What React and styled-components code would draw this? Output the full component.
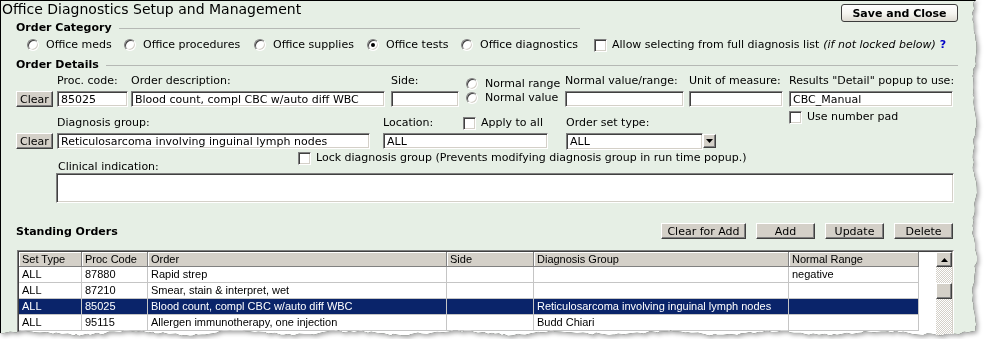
import React from 'react';
import styled, { createGlobalStyle, css } from 'styled-components';

const UI = '"DejaVu Sans", Verdana, sans-serif';
const GRID_FONT = '"Liberation Sans", Arial, sans-serif';

// the screenshot is cut out of a bigger window: ragged right and bottom edge
const PAPER_W = 979;
const PAPER_H = 339;
let seed = 17;
const rnd = () => {
  seed = (seed * 9301 + 49297) % 233280;
  return seed / 233280;
};
const tornEdge = (() => {
  const pts = ['0px 0px', `${PAPER_W - 3}px 0px`];
  for (let y = 3; y < PAPER_H - 5; y += 2 + Math.round(rnd() * 4)) {
    const x = PAPER_W - 3.5 - 1.6 * Math.sin(y / 11) - rnd() * 2.2;
    pts.push(`${x.toFixed(1)}px ${y}px`);
  }
  for (let x = PAPER_W - 5; x > 0; x -= 2 + Math.round(rnd() * 5)) {
    const y = PAPER_H - 5 - 1.8 * Math.sin(x / 17) - rnd() * 2.4;
    pts.push(`${x}px ${y.toFixed(1)}px`);
  }
  pts.push(`0px ${PAPER_H - 6}px`);
  return `polygon(${pts.join(', ')})`;
})();

const GlobalStyle = createGlobalStyle`
  html, body { margin: 0; padding: 0; background: #fff; }
`;

const raised = css`
  box-sizing: border-box;
  background: #d4d0c8;
  border: 1px solid;
  border-color: #fff #404040 #404040 #fff;
  box-shadow: inset -1px -1px #808080;
`;

const sunken = css`
  box-sizing: border-box;
  background: #fff;
  border: 1px solid;
  border-color: #808080 #fff #fff #808080;
  box-shadow: inset 1px 1px #404040, inset -1px -1px #d4d0c8;
`;

const Sheet = styled.div`
  width: ${PAPER_W}px;
  height: ${PAPER_H}px;
  filter: drop-shadow(0 0 0.6px rgba(0, 0, 0, 0.9)) drop-shadow(2px 2px 2px rgba(0, 0, 0, 0.35));
`;

const Paper = styled.div`
  box-sizing: border-box;
  width: 100%;
  height: 100%;
  overflow: hidden;
  background: #e6efe5;
  border-left: 1px solid #000;
  border-top: 1px solid #000;
  clip-path: ${tornEdge};
  font: 11px/14px ${UI};
  color: #000;
`;

const TitleBar = styled.div`
  display: flex;
  justify-content: space-between;
  align-items: flex-start;
  width: 957px;
  height: 20px;
`;

const Title = styled.div`
  margin: 0 0 0 1px;
  font-size: 14px;
  line-height: 17px;
`;

const SaveButton = styled.button`
  width: 117px;
  height: 18px;
  margin-top: 3px;
  padding: 0;
  border: 1px solid #3c3c3c;
  border-radius: 3px;
  background: linear-gradient(#ffffff, #f4f4ef 55%, #dedcd3);
  font: bold 11px ${UI};
  color: #000;
`;

const SectionHead = styled.div`
  box-sizing: border-box;
  display: flex;
  align-items: center;
  width: ${(p) => p.$w}px;
  height: 14px;
  margin-top: ${(p) => p.$top}px;
  padding-left: 15px;
`;

const HeadText = styled.span`
  font-weight: bold;
  white-space: nowrap;
`;

const Rule = styled.span`
  flex: 1;
  height: 1px;
  margin-left: 7px;
  background: #b5b8b4;
`;

const CategoryRow = styled.div`
  display: flex;
  align-items: center;
  height: 14px;
  margin-top: 3px;
  padding-left: 26px;
`;

const Choice = styled.label`
  display: flex;
  align-items: center;
  flex: none;
  width: ${(p) => (p.$w ? `${p.$w}px` : 'auto')};
  white-space: nowrap;
`;

const Radio = styled.span`
  position: relative;
  flex: none;
  width: 12px;
  height: 12px;
  margin-right: 7px;
  border-radius: 50%;
  ${sunken};

  &::after {
    content: '';
    display: ${(p) => (p.$on ? 'block' : 'none')};
    position: absolute;
    left: 3px;
    top: 3px;
    width: 4px;
    height: 4px;
    border-radius: 50%;
    background: #000;
  }
`;

const Check = styled.span`
  flex: none;
  width: 13px;
  height: 13px;
  margin-right: 5px;
  ${sunken};
`;

const Hint = styled.i`
  margin-left: 4px;
`;

const Help = styled.b`
  margin-left: 4px;
  color: #0000c8;
`;

const FieldRow = styled.div`
  display: flex;
  align-items: flex-start;
  height: ${(p) => p.$h}px;
  margin-top: ${(p) => p.$top}px;
  padding-left: 15px;
`;

const Col = styled.div`
  display: flex;
  flex-direction: column;
  flex: none;
  width: ${(p) => p.$w}px;
  margin-left: ${(p) => p.$gap || 0}px;
  padding-top: ${(p) => p.$pad || 0}px;
`;

const Label = styled.div`
  display: flex;
  align-items: center;
  height: 14px;
  margin-bottom: 3px;
  white-space: nowrap;
`;

const LabelPart = styled.span`
  flex: none;
  width: ${(p) => p.$w}px;
`;

const Line = styled.div`
  display: flex;
  align-items: center;
  height: 14px;
  white-space: nowrap;
`;

const TextBox = styled.input`
  ${sunken};
  width: 100%;
  height: 16px;
  padding: 0 3px;
  font: 11px ${UI};
  color: #000;
  outline: none;
`;

const SubCheck = styled(Choice)`
  margin-top: 3px;
`;

const ClearButton = styled.button`
  ${raised};
  width: 37px;
  height: 16px;
  padding: 0;
  font: 11px ${UI};
  color: #000;
`;

const SelectBox = styled.div`
  display: flex;
  align-items: flex-start;
`;

const SelectValue = styled.div`
  ${sunken};
  width: 137px;
  height: 17px;
  padding: 0 3px;
  line-height: 15px;
`;

const ArrowButton = styled.span`
  ${raised};
  display: flex;
  align-items: center;
  justify-content: center;
  flex: none;
  width: ${(p) => p.$w}px;
  height: ${(p) => p.$h}px;
  margin-top: ${(p) => p.$top || 0}px;
`;

const LockRow = styled.div`
  display: flex;
  height: 22px;
  margin-top: 4px;
  padding-left: 57px;
`;

const ClinicalLabel = styled.div`
  flex: none;
  align-self: flex-end;
  width: 240px;
  line-height: 13px;
`;

const LockChoice = styled(Choice)`
  align-self: flex-start;
`;

const Memo = styled.textarea`
  ${sunken};
  display: block;
  width: 898px;
  height: 30px;
  margin: 0 0 0 55px;
  padding: 2px 3px;
  resize: none;
  font: 11px ${UI};
  outline: none;
`;

const OrdersBar = styled.div`
  box-sizing: border-box;
  display: flex;
  align-items: flex-start;
  gap: 10px;
  width: 952px;
  height: 16px;
  margin-top: 20px;
  padding-left: 15px;
`;

const BarTitle = styled(HeadText)`
  align-self: flex-end;
  margin-right: auto;
`;

const BarButton = styled.button`
  ${raised};
  width: ${(p) => p.$w}px;
  height: 16px;
  padding: 0;
  font: 11px ${UI};
  color: #000;
`;

const Grid = styled.div`
  box-sizing: border-box;
  width: 937px;
  height: 120px;
  margin: 11px 0 0 16px;
  border: 1px solid;
  border-color: #808080 #fff #fff #808080;
`;

const GridInner = styled.div`
  display: flex;
  height: 100%;
  border: 1px solid;
  border-color: #404040 #d4d0c8 #d4d0c8 #404040;
  background: #fff;
`;

const TableArea = styled.div`
  flex: 1;
`;

const Table = styled.table`
  width: 900px;
  table-layout: fixed;
  border-spacing: 0;
  font: 11px ${GRID_FONT};
`;

const Th = styled.th`
  height: 14px;
  padding: 0 3px;
  background: #d4d0c8;
  border-right: 1px solid #808080;
  border-bottom: 1px solid #808080;
  box-shadow: inset 1px 1px #fff;
  font-weight: normal;
  line-height: 14px;
  text-align: left;
  white-space: nowrap;
`;

const Td = styled.td`
  height: 15px;
  padding: 0 3px;
  border-right: 1px solid #c5c5c5;
  border-bottom: 1px solid #c5c5c5;
  background: ${(p) => (p.$sel ? '#0a246a' : '#fff')};
  color: ${(p) => (p.$sel ? '#fff' : '#000')};
  line-height: 15px;
  white-space: nowrap;
  overflow: hidden;
`;

const ScrollBar = styled.div`
  display: flex;
  flex-direction: column;
  flex: none;
  width: 16px;
  background: repeating-conic-gradient(#d4d0c8 0 25%, #fff 0 50%) 0 0 / 2px 2px;
`;

const Thumb = styled.div`
  ${raised};
  height: 16px;
  margin-top: 16px;
`;

const Triangle = ({ down }) => (
  <svg width="7" height="4" viewBox="0 0 7 4">
    <path d={down ? 'M0 0H7L3.5 4Z' : 'M0 4H7L3.5 0Z'} fill="#000" />
  </svg>
);

const categories = [
  { label: 'Office meds', w: 97 },
  { label: 'Office procedures', w: 130 },
  { label: 'Office supplies', w: 113 },
  { label: 'Office tests', w: 94, on: true },
  { label: 'Office diagnostics', w: 133 },
];

const columns = [
  { title: 'Set Type', w: 63 },
  { title: 'Proc Code', w: 66 },
  { title: 'Order', w: 299 },
  { title: 'Side', w: 87 },
  { title: 'Diagnosis Group', w: 255 },
  { title: 'Normal Range', w: 130 },
];

const orders = [
  ['ALL', '87880', 'Rapid strep', '', '', 'negative'],
  ['ALL', '87210', 'Smear, stain & interpret, wet', '', '', ''],
  ['ALL', '85025', 'Blood count, compl CBC w/auto diff WBC', '', 'Reticulosarcoma involving inguinal lymph nodes', ''],
  ['ALL', '95115', 'Allergen immunotherapy, one injection', '', 'Budd Chiari', ''],
];

export default function App() {
  return (
    <>
      <GlobalStyle />
      <Sheet>
        <Paper>
          <TitleBar>
            <Title>Office Diagnostics Setup and Management</Title>
            <SaveButton>Save and Close</SaveButton>
          </TitleBar>

          <SectionHead $w={579} $top={0}>
            <HeadText>Order Category</HeadText>
            <Rule />
          </SectionHead>
          <CategoryRow>
            {categories.map((c) => (
              <Choice key={c.label} $w={c.w}>
                <Radio $on={c.on} />
                {c.label}
              </Choice>
            ))}
            <Choice>
              <Check />
              Allow selecting from full diagnosis list
              <Hint>(if not locked below)</Hint>
              <Help>?</Help>
            </Choice>
          </CategoryRow>

          <SectionHead $w={957} $top={6}>
            <HeadText>Order Details</HeadText>
            <Rule />
          </SectionHead>

          <FieldRow $h={33} $top={2}>
            <Col $w={37}>
              <Label />
              <ClearButton>Clear</ClearButton>
            </Col>
            <Col $w={71} $gap={4}>
              <Label>Proc. code:</Label>
              <TextBox readOnly value="85025" />
            </Col>
            <Col $w={254} $gap={3}>
              <Label>Order description:</Label>
              <TextBox readOnly value="Blood count, compl CBC w/auto diff WBC" />
            </Col>
            <Col $w={68} $gap={6}>
              <Label>Side:</Label>
              <TextBox readOnly value="" />
            </Col>
            <Col $w={97} $gap={7} $pad={3}>
              <Line>
                <Radio />
                Normal range
              </Line>
              <Line>
                <Radio />
                Normal value
              </Line>
            </Col>
            <Col $w={119} $gap={2}>
              <Label>Normal value/range:</Label>
              <TextBox readOnly value="" />
            </Col>
            <Col $w={94} $gap={5}>
              <Label>Unit of measure:</Label>
              <TextBox readOnly value="" />
            </Col>
            <Col $w={164} $gap={6}>
              <Label>Results "Detail" popup to use:</Label>
              <TextBox readOnly value="CBC_Manual" />
              <SubCheck>
                <Check />
                Use number pad
              </SubCheck>
            </Col>
          </FieldRow>

          <FieldRow $h={31} $top={9}>
            <Col $w={37}>
              <Label />
              <ClearButton>Clear</ClearButton>
            </Col>
            <Col $w={313} $gap={4}>
              <Label>Diagnosis group:</Label>
              <TextBox readOnly value="Reticulosarcoma involving inguinal lymph nodes" />
            </Col>
            <Col $w={165} $gap={13}>
              <Label>
                <LabelPart $w={80}>Location:</LabelPart>
                <Check />
                Apply to all
              </Label>
              <TextBox readOnly value="ALL" />
            </Col>
            <Col $w={150} $gap={18}>
              <Label>Order set type:</Label>
              <SelectBox>
                <SelectValue>ALL</SelectValue>
                <ArrowButton $w={13} $h={14} $top={1}>
                  <Triangle down />
                </ArrowButton>
              </SelectBox>
            </Col>
          </FieldRow>

          <LockRow>
            <ClinicalLabel>Clinical indication:</ClinicalLabel>
            <LockChoice>
              <Check />
              Lock diagnosis group (Prevents modifying diagnosis group in run time popup.)
            </LockChoice>
          </LockRow>
          <Memo readOnly value="" />

          <OrdersBar>
            <BarTitle>Standing Orders</BarTitle>
            <BarButton $w={85}>Clear for Add</BarButton>
            <BarButton $w={59}>Add</BarButton>
            <BarButton $w={59}>Update</BarButton>
            <BarButton $w={59}>Delete</BarButton>
          </OrdersBar>

          <Grid>
            <GridInner>
              <TableArea>
                <Table>
                  <colgroup>
                    {columns.map((c) => (
                      <col key={c.title} style={{ width: c.w }} />
                    ))}
                  </colgroup>
                  <thead>
                    <tr>
                      {columns.map((c) => (
                        <Th key={c.title}>{c.title}</Th>
                      ))}
                    </tr>
                  </thead>
                  <tbody>
                    {orders.map((row, i) => (
                      <tr key={row[1]}>
                        {row.map((cell, j) => (
                          <Td key={j} $sel={i === 2}>
                            {cell}
                          </Td>
                        ))}
                      </tr>
                    ))}
                  </tbody>
                </Table>
              </TableArea>
              <ScrollBar>
                <ArrowButton $w={16} $h={15}>
                  <Triangle />
                </ArrowButton>
                <Thumb />
              </ScrollBar>
            </GridInner>
          </Grid>
        </Paper>
      </Sheet>
    </>
  );
}
